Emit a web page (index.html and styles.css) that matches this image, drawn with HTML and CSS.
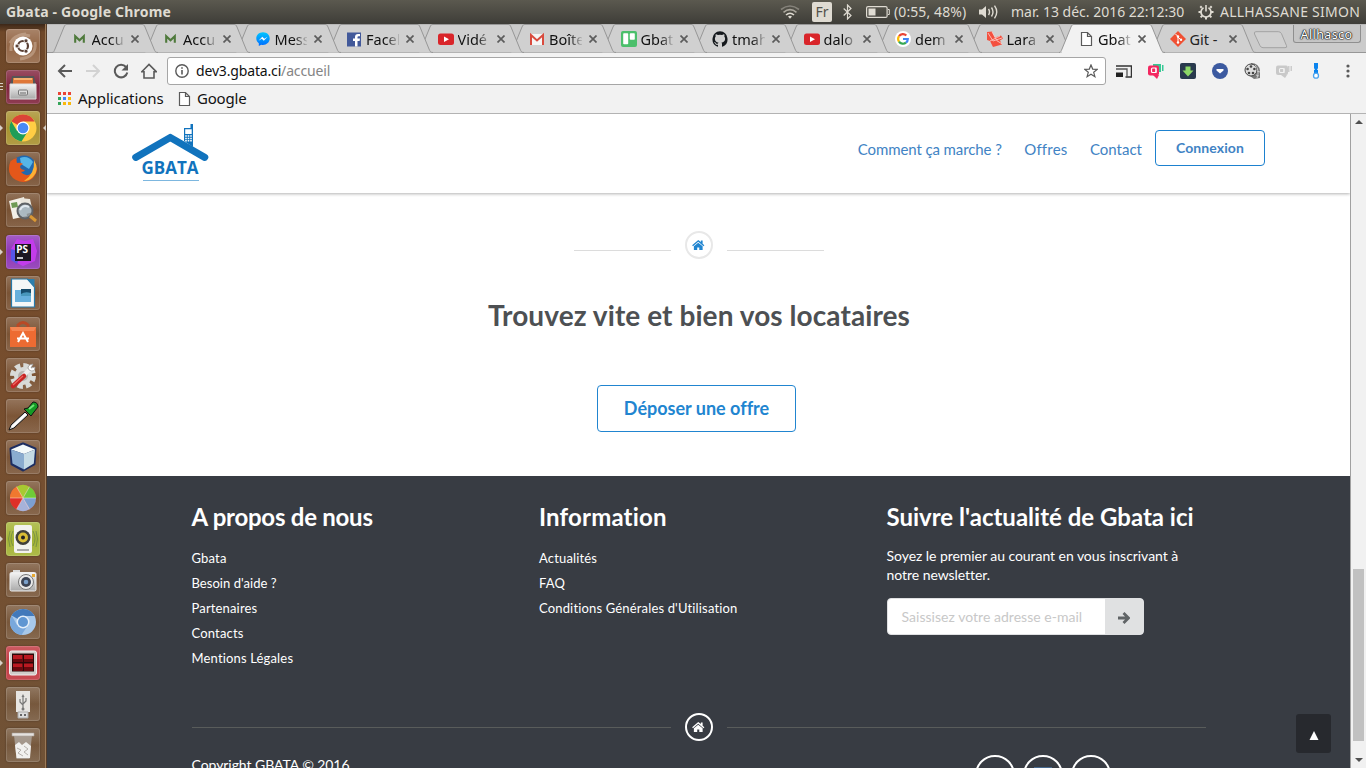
FILE: index.html
```html
<!DOCTYPE html>
<html lang="fr">
<head>
<meta charset="utf-8">
<title>Gbata</title>
<link rel="stylesheet" href="styles.css">
</head>
<body>
<svg class="defs" width="0" height="0">
  <defs>
    <linearGradient id="msg" x1="0" y1="0" x2="0" y2="1"><stop offset="0" stop-color="#00c6ff"/><stop offset="1" stop-color="#006bff"/></linearGradient>
    <linearGradient id="metal" x1="0" y1="0" x2="0" y2="1"><stop offset="0" stop-color="#f4f4f4"/><stop offset="1" stop-color="#a9a9a9"/></linearGradient>
    <symbol id="tab" viewBox="0 0 106 29"><path d="M0 28.5C2 28.5 2 27 3 25L12 3C13 1 13 .5 15 .5H90C92 .5 92 1 93 3L102 25C103 27 103 28.5 106 28.5Z" fill="currentColor"/><path d="M0 28.5C2 28.5 2 27 3 25L12 3C13 1 13 .5 15 .5H90C92 .5 92 1 93 3L102 25C103 27 103 28.5 106 28.5" fill="none" stroke="#979797"/></symbol>
    <symbol id="x" viewBox="0 0 8 8"><path d="M.5.5l7 7m0-7l-7 7" stroke="#5c5c5c" stroke-width="1.7"/></symbol>
    <symbol id="m" viewBox="0 0 16 16"><path d="M3.200 11.800V5.200l4.300 4 4.300-4v6.600" fill="none" stroke="#4f7a3c" stroke-width="2.100"/></symbol>
    <symbol id="yt" viewBox="0 0 16 16"><rect y="2.500" width="16" height="11.500" rx="2.500" fill="#d9252a"/><path d="M6 5.500l5 2.700-5 2.700z" fill="#fff"/></symbol>
    <symbol id="page" viewBox="0 0 16 16"><path d="M3.500 1.500h6l4 4v9h-10zM9.500 1.500v4h4" fill="#fff" stroke="#5a5a5a" stroke-width="1.200"/></symbol>
    <symbol id="house" viewBox="0 0 14 12"><path d="M7 0L0 6l1 1 6-5 6 5 1-1-2-1.800V.5h-2v1.900z"/><path d="M2 7.200L7 3l5 4.200V12H8.200V8.500H5.800V12H2z"/></symbol>
  </defs>
</svg>

<header class="panel">
  <span class="panel-title">Gbata - Google Chrome</span>
  <div class="indicators">
    <svg class="i-wifi" width="20" height="16" viewBox="0 0 20 16" fill="none" stroke-width="1.600"><path d="M1 5.500Q10-1.500 19 5.500" stroke="#85827a"/><path d="M3.500 8.300Q10 3 16.500 8.300" stroke="#aaa69c"/><path d="M6 11Q10 7.500 14 11" stroke="#dfdbd2"/><path d="M8 12.500Q10 11 12 12.500L10 14.700z" fill="#dfdbd2"/></svg>
    <span class="lang">Fr</span>
    <svg class="i-bt" width="9" height="16" viewBox="0 0 9 16" fill="none" stroke="#dfdbd2" stroke-width="1.200"><path d="M.7 4.500l7.300 7L4.500 15V1L8 4.500l-7.300 7"/></svg>
    <svg class="i-bat" width="24" height="12" viewBox="0 0 24 12"><rect x=".6" y=".6" width="20.500" height="10.800" rx="1.500" fill="none" stroke="#dfdbd2" stroke-width="1.200"/><path d="M2.500 2.500h7v7h-7z" fill="#dfdbd2"/><path d="M22 3.500h1.300v5H22" fill="none" stroke="#dfdbd2"/></svg>
    <span class="battery">(0:55, 48%)</span>
    <svg class="i-vol" width="20" height="14" viewBox="0 0 20 14"><path d="M0 4.500h3L7 1v12L3 9.500H0z" fill="#dfdbd2"/><path d="M9.500 4q2 3 0 6M12.500 2.500q3 4.500 0 9M15.500.7q4.500 6.300 0 12.600" fill="none" stroke="#dfdbd2" stroke-width="1.400"/></svg>
    <span class="date">mar. 13 déc. 2016 22:12:30</span>
    <svg class="i-gear" width="16" height="16" viewBox="0 0 16 16" fill="none" stroke="#dfdbd2"><path d="M5.500 3.700a5 5 0 1 0 5 0" stroke-width="1.700"/><path d="M8 1v6.500" stroke-width="1.600"/><path d="M3.700 3.700L2.300 2.300M12.300 3.700l1.400-1.400M3 8H.5M13 8h2.500M4.300 11.700l-1.700 1.700M11.700 11.700l1.700 1.700M8 13v2.500" stroke-width="2"/></svg>
    <span class="user">ALLHASSANE SIMON</span>
  </div>
</header>

<div class="desktop">
<nav class="launcher">
  <div class="app ubuntu"><svg viewBox="0 0 34 34"><path d="M5 22Q4 6 20 5M29 13Q31 28 14 30M4 14Q10 3 24 7" fill="none" stroke="#d9c0ad" stroke-width="3" opacity=".45"/><circle cx="17" cy="17" r="9.500" fill="#fff"/><circle cx="17" cy="17" r="5" fill="none" stroke="#5a4034" stroke-width="2.200"/><g fill="#5a4034" stroke="#fff" stroke-width=".8"><circle cx="11" cy="17" r="2"/><circle cx="20" cy="11.800" r="2"/><circle cx="20" cy="22.200" r="2"/></g></svg></div>
  <div class="app files"><i class="lines"></i><svg viewBox="0 0 34 34"><path d="M6 6h22l2 9H4z" fill="#555"/><path d="M7 8h20v7H7z" fill="#df7738"/><path d="M8 8h18v2H8z" fill="#f5b06e"/><path d="M4 14h26v15H4z" fill="url(#metal)" stroke="#ddd"/><rect x="12.500" y="20" width="9" height="5" rx="1" fill="#ddd" stroke="#777"/><path d="M14 23h6" stroke="#666"/></svg></div>
  <div class="app chrome"><i class="run"></i><i class="focus"></i><svg viewBox="0 0 34 34"><circle cx="17" cy="17" r="13.500" fill="#ffce44"/><path d="M17 17L5.300 10.200A13.500 13.500 0 0 1 28.700 10.500H17z" fill="#db4437"/><path d="M5.300 10.200A13.500 13.500 0 0 0 15.500 30.400L22 20 17 17 11 20z" fill="#1f9d58"/><circle cx="17" cy="17" r="6.500" fill="#fff"/><circle cx="17" cy="17" r="5.300" fill="#4a8af4"/></svg></div>
  <div class="app"><svg viewBox="0 0 34 34"><circle cx="18" cy="16" r="12.500" fill="#2268ae"/><path d="M14 6q8-3 13 4l-4 7-8-5z" fill="#56b5e8"/><path d="M5 8q-6 14 5 20 9 5 17-2 5-6 4-12-2 6-6 8-6 3-10-2 3 0 4-2-4 0-5-3 0-2 3-3-3-2-6-1-1-3 0-5-4 1-6 3z" fill="#e4571a"/><path d="M28 8q6 10-1 17-4 4-9 4 11-7 10-21z" fill="#fbb034"/></svg></div>
  <div class="app"><svg viewBox="0 0 34 34"><path d="M3 8l15-4 3 19-14 3z" fill="#f3f0e8"/><path d="M5 10l6-1 1 5-6 1z" fill="#6e9a54"/><path d="M14 5l10 1 3 13-10 3z" fill="#e9e6dd"/><circle cx="19" cy="18" r="7.500" fill="#94a8b6" fill-opacity=".75" stroke="#5e6266" stroke-width="2"/><path d="M14 17q3-6 9-3" stroke="#e1e9ef" stroke-width="2" fill="none"/><path d="M24 23l6 5" stroke="#d99834" stroke-width="3"/></svg></div>
  <div class="app storm"><i class="run"></i><svg viewBox="0 0 34 34"><path d="M5 14L11 4l8 2 8-2 4 12-2 10-12 5-10-5z" fill="#c23ceb"/><path d="M5 14l10 3-4 12-6-4z" fill="#5756e7"/><path d="M9 9h16v17H9z" fill="#1b1620"/><path d="M11 23h6" stroke="#fff" stroke-width="1.500"/><text x="10.300" y="18" font-family="Open Sans" font-size="10" font-weight="700" fill="#fff">PS</text></svg></div>
  <div class="app"><svg viewBox="0 0 34 34"><path d="M5.500 3h16l7 8v20h-23z" fill="#f5f7f7" stroke="#267aab" stroke-width="1.200"/><path d="M21 3h7.500v8z" fill="#2c7eac"/><path d="M9 14h16v12H9z" fill="#67b0dc"/><path d="M15 13h10v6H15z" fill="#174c6b"/><path d="M15 18q4-3 10-1v3H15z" fill="#4897bb"/></svg></div>
  <div class="app"><svg viewBox="0 0 34 34"><path d="M12 11V8q5-5 10 0v3" fill="none" stroke="#b84926" stroke-width="3"/><path d="M4 10h26v20H4z" fill="#ed6b32"/><path d="M4 10h26l-2 4H6z" fill="#f58653"/><path d="M12 25l5-9 5 9M11 21.500h12" fill="none" stroke="#fff" stroke-width="2"/></svg></div>
  <div class="app"><svg viewBox="0 0 34 34"><circle cx="17" cy="18" r="10" fill="none" stroke="#d8dad8" stroke-width="6" stroke-dasharray="5 2.850"/><circle cx="17" cy="18" r="9" fill="#d8dad8"/><circle cx="17" cy="18" r="5" fill="#b7b2ae"/><path d="M17 18l8-8" stroke="#eee" stroke-width="4"/><path d="M23 12q-3-5 4-6l-2 4 4-1q0 6-6 3" fill="#fff" stroke="#999" stroke-width=".7"/><path d="M7 28l11-10" stroke="#c72525" stroke-width="4.500" stroke-linecap="round"/><path d="M7 27l10-9" stroke="#ef6862" stroke-width="1.200"/></svg></div>
  <div class="app"><svg viewBox="0 0 34 34"><path d="M3 31l2-5L19 13l3 3L8 29z" fill="#ddd" stroke="#111"/><path d="M6 28L20 15" stroke="#fff" stroke-width="2"/><path d="M18 10l7 7 3-4 4-5q0-5-5-5l-5 6z" fill="#159b25" stroke="#111"/><path d="M23 10l5-4" stroke="#6ee476" stroke-width="2"/></svg></div>
  <div class="app"><svg viewBox="0 0 34 34"><path d="M17 4l12 5-1 15-11 6-11-6L5 9z" fill="#1d2e61" stroke="#1d2e61" stroke-width="3" stroke-linejoin="round"/><path d="M5 9.500L17 4.500l12 5-11 4.500z" fill="#f4fafa"/><path d="M5 9.500L18 14v15.500L6.500 23.500z" fill="#8aaccf"/><path d="M29 9.500L18 14v15.500l9.800-6z" fill="#c5dbe5"/></svg></div>
  <div class="app"><svg viewBox="0 0 34 34"><circle cx="17" cy="17" r="13" fill="#e04b40"/><path d="M17 17L10.500 5.700A13 13 0 0 1 23.500 5.700z" fill="#a7c931"/><path d="M17 17L23.500 5.700A13 13 0 0 1 30 17z" fill="#6fcb38"/><path d="M17 17L4 17A13 13 0 0 1 10.500 5.700z" fill="#f0782f"/><path d="M17 17H30A13 13 0 0 1 23.500 28.300z" fill="#7c9fd0"/><path d="M17 17l6.500 11.300A13 13 0 0 1 10.500 28.300z" fill="#a6b2d9"/><path d="M17 17L10.500 28.300A13 13 0 0 1 4 17z" fill="#de2f28"/><path d="M4 17h26M10.500 5.700l13 22.600M10.500 28.300l13-22.600" stroke="#fff" stroke-width=".6" opacity=".7"/></svg></div>
  <div class="app audio"><i class="run"></i><svg viewBox="0 0 34 34"><path d="M7 9q-4 8 0 15M27 9q4 8 0 15M4 9q-3 8 0 16M30 9q3 8 0 16" fill="none" stroke="#6e8b45" opacity=".8"/><rect x="8" y="3" width="18" height="28" rx="2" fill="#f3f3ef"/><circle cx="17" cy="15.500" r="7.500" fill="#3f3f3a"/><circle cx="17" cy="15.500" r="5" fill="#d9bd35"/><circle cx="17" cy="15.500" r="2" fill="#222"/><path d="M11 28h12" stroke="#aaa" stroke-width="2"/></svg></div>
  <div class="app"><svg viewBox="0 0 34 34"><path d="M7 7h7v4H7z" fill="#ddd"/><rect x="4" y="9.500" width="26" height="18.500" rx="1.500" fill="url(#metal)" stroke="#eee"/><circle cx="20" cy="19" r="7.500" fill="#e8e8e8" stroke="#777"/><circle cx="20" cy="19" r="5" fill="#3c4455"/><circle cx="20" cy="19" r="2.300" fill="#7aa0cb"/><path d="M26 11h3v3h-3z" fill="#e7a934"/></svg></div>
  <div class="app"><svg viewBox="0 0 34 34"><circle cx="17" cy="17" r="13" fill="#a7c8ea"/><path d="M17 17L5.700 10.500A13 13 0 0 1 28.500 11H17z" fill="#4279ba"/><path d="M5.700 10.500A13 13 0 0 0 15.500 30L22 20 17 17l-6 3z" fill="#79a8dc"/><circle cx="17" cy="17" r="6.500" fill="#e5eff9"/><circle cx="17" cy="17" r="5" fill="#5f96d2"/></svg></div>
  <div class="app term"><i class="run"></i><svg viewBox="0 0 34 34"><rect x="3.500" y="5" width="27" height="24" rx="2" fill="#d0ccc9" stroke="#f1eeee"/><path d="M6 7.500h22v18H6z" fill="#2b0809"/><path d="M7 9h9.500v7H7zM18 9h9v7h-9zM7 17.500h9.500v7H7zM18 17.500h9v7h-9z" fill="#b91921"/><path d="M7 13h9.500v3H7zM18 13h9v3h-9zM7 21h9.500v3.500H7zM18 21h9v3.500h-9z" fill="#68090e"/></svg></div>
  <div class="app"><svg viewBox="0 0 34 34"><path d="M10 4h14v21H10z" fill="#e7e5e2"/><path d="M12 25h10v6H12z" fill="#ddd" stroke="#aaa"/><path d="M14 28h2M18 28h2" stroke="#666" stroke-width="2"/><path d="M17 9v13M14 12v3l3 3M20 11v3l-3 3" fill="none" stroke="#777" stroke-width="1.200"/><path d="M15.500 10l1.500-3 1.500 3z" fill="#777"/><circle cx="17" cy="22" r="1.500" fill="#777"/></svg></div>
  <div class="app"><svg viewBox="0 0 34 34"><path d="M8 7h18l-2.500 24h-13z" fill="#b7b1ab" fill-opacity=".7"/><path d="M6 5h22v3H6z" fill="#e5e2df" stroke="#aaa39c" stroke-width=".6"/><path d="M9 17l4-3 3 3 4-3 5 4-1 12H10.500z" fill="#f1f0ee"/><path d="M11 20l4 2-3 3 5 3M18 18l4 3-4 3 4 3" fill="none" stroke="#b5b0ab"/></svg></div>
</nav>

<main class="browser">
  <div class="tabstrip">
    <div class="tab"><svg class="shape"><use href="#tab"/></svg><svg class="fav"><use href="#m"/></svg><span>Accu</span><svg class="x"><use href="#x"/></svg></div>
    <div class="tab"><svg class="shape"><use href="#tab"/></svg><svg class="fav"><use href="#m"/></svg><span>Accu</span><svg class="x"><use href="#x"/></svg></div>
    <div class="tab"><svg class="shape"><use href="#tab"/></svg><svg class="fav" viewBox="0 0 16 16"><path d="M8 1.200C4 1.200 1.300 4 1.300 7.500c0 2 1 3.700 2.500 4.800V15l2.400-1.300c4.500 1 8.500-2 8.500-6.200C14.700 4 12 1.200 8 1.200z" fill="url(#msg)"/><path d="M3.500 9.700l3.800-4 2 2 3.300-2-3.800 4-2-2z" fill="#fff"/></svg><span>Mess</span><svg class="x"><use href="#x"/></svg></div>
    <div class="tab"><svg class="shape"><use href="#tab"/></svg><svg class="fav" viewBox="0 0 16 16"><path d="M1 1.500h14v14H1z" fill="#42599a"/><path d="M9 15.500V10H7V7.500h2V6q0-3 3-3h2v2.300h-1.500q-1 0-1 1v1.200H14L13.600 10h-2.100v5.500" fill="#fff"/></svg><span>Facel</span><svg class="x"><use href="#x"/></svg></div>
    <div class="tab"><svg class="shape"><use href="#tab"/></svg><svg class="fav"><use href="#yt"/></svg><span>Vidé</span><svg class="x"><use href="#x"/></svg></div>
    <div class="tab"><svg class="shape"><use href="#tab"/></svg><svg class="fav" viewBox="0 0 16 16"><path d="M1 3h14v11H1z" fill="#f5f5f5"/><path d="M2 14V4l6 5.500L14 4v10" fill="none" stroke="#d94b3e" stroke-width="2"/></svg><span>Boîte</span><svg class="x"><use href="#x"/></svg></div>
    <div class="tab"><svg class="shape"><use href="#tab"/></svg><svg class="fav" viewBox="0 0 16 16"><rect width="16" height="16" rx="2" fill="#4bbf6b"/><rect x="2.200" y="2.300" width="5" height="11" rx=".8" fill="#fff"/><rect x="8.800" y="2.300" width="5" height="6.500" rx=".8" fill="#fff"/></svg><span>Gbat</span><svg class="x"><use href="#x"/></svg></div>
    <div class="tab"><svg class="shape"><use href="#tab"/></svg><svg class="fav" viewBox="0 0 16 16"><path d="M8 .3a8 8 0 0 0-2.500 15.400c.4 0 .5-.2.500-.4v-1.500c-2.200.5-2.700-1-2.700-1-.4-.9-.9-1.200-.9-1.200-.7-.5.100-.5.100-.5.800.1 1.200.8 1.200.8.700 1.300 1.900.9 2.300.7.100-.5.300-.9.500-1.100-1.800-.2-3.600-.9-3.600-4 0-.9.300-1.600.8-2.100 0-.200-.4-1 .1-2.100 0 0 .7-.2 2.200.8a7.500 7.500 0 0 1 4 0c1.500-1 2.200-.8 2.200-.8.500 1.100.2 1.900.1 2.100.5.500.8 1.200.8 2.100 0 3.100-1.900 3.800-3.700 4 .3.300.6.800.6 1.500v2.300c0 .2.100.5.500.4A8 8 0 0 0 8 .3z" fill="#15191d"/></svg><span>tmah</span><svg class="x"><use href="#x"/></svg></div>
    <div class="tab"><svg class="shape"><use href="#tab"/></svg><svg class="fav"><use href="#yt"/></svg><span>dalo</span><svg class="x"><use href="#x"/></svg></div>
    <div class="tab"><svg class="shape"><use href="#tab"/></svg><svg class="fav" viewBox="0 0 16 16"><circle cx="8" cy="8" r="8" fill="#fff"/><g fill="none" stroke-width="2.200"><path d="M4 5.200A4.800 4.800 0 0 1 11.300 4.500" stroke="#e94435"/><path d="M4 10.600A4.800 4.800 0 0 1 4 5.200" stroke="#fbbc05"/><path d="M11 11.700A4.800 4.800 0 0 1 4 10.600" stroke="#34a853"/><path d="M8 8h4.800q0 2.400-1.800 3.700" stroke="#4285f4"/></g></svg><span>dem</span><svg class="x"><use href="#x"/></svg></div>
    <div class="tab"><svg class="shape"><use href="#tab"/></svg><svg class="fav" viewBox="0 0 16 16"><path d="M0 1l5-.5 3 6 6-2 2 3-3 2 2 4-9 2.500-3-6-3-1z" fill="#f4503f"/><path d="M1 2l5 8 9-3M5 .8l5 9 5 3M3 10l10-5" stroke="#fbd3cd" stroke-width=".8" fill="none"/></svg><span>Lara</span><svg class="x"><use href="#x"/></svg></div>
    <div class="tab active"><svg class="shape"><use href="#tab"/></svg><svg class="fav"><use href="#page"/></svg><span>Gbat</span><svg class="x"><use href="#x"/></svg></div>
    <div class="tab"><svg class="shape"><use href="#tab"/></svg><svg class="fav" viewBox="0 0 16 16"><path d="M8 0l8 8-8 8-8-8z" fill="#f05033"/><path d="M5.500 3l2.500 2.500v6M8 6l3 3" stroke="#fff" fill="none"/><g fill="#fff"><circle cx="8" cy="5.500" r="1.200"/><circle cx="8" cy="11.500" r="1.200"/><circle cx="11" cy="8.700" r="1.200"/></g></svg><span class="fits">Git -</span><svg class="x"><use href="#x"/></svg></div>
    <svg class="newtab" width="35" height="18" viewBox="0 0 35 18"><path d="M3 .7h22.500q2 0 3 2l5 12q1 2-1.500 2H10q-2 0-3-2L1.500 3Q.7.700 3 .7z" fill="#d0d0d0" stroke="#a2a2a2"/></svg>
    <span class="profile">Allhasco</span>
  </div>

  <div class="toolbar">
    <svg class="nav-i" viewBox="0 0 16 16"><path d="M15 8H2m6-6L2 8l6 6" fill="none" stroke="#5a5a5a" stroke-width="2"/></svg>
    <svg class="nav-i" viewBox="0 0 16 16"><path d="M1 8h13M8 2l6 6-6 6" fill="none" stroke="#d2d2d2" stroke-width="2"/></svg>
    <svg class="nav-i" viewBox="0 0 16 16"><path d="M13 4A6.300 6.300 0 1 0 14.300 9.500" fill="none" stroke="#5a5a5a" stroke-width="2"/><path d="M15 1v6.500H8.500z" fill="#5a5a5a"/></svg>
    <svg class="nav-i" viewBox="0 0 16 16"><path d="M.8 8.700L8 1.500l7.200 7.200H13V15H3V8.700z" fill="none" stroke="#5a5a5a" stroke-width="1.600"/></svg>
    <div class="omnibox">
      <svg width="14" height="14" viewBox="0 0 14 14"><circle cx="7" cy="7" r="6.200" fill="none" stroke="#5a5a5a" stroke-width="1.400"/><path d="M7 6v4.500M7 3.200v1.600" stroke="#5a5a5a" stroke-width="1.600"/></svg>
      <span class="url">dev3.gbata.ci<em>/accueil</em></span>
      <svg width="14" height="14" viewBox="0 0 14 14"><path d="M7 .9l1.700 4.200 4.500.3-3.500 2.900 1.200 4.400L7 10.300l-3.900 2.400 1.200-4.400L.8 5.400l4.500-.3z" fill="none" stroke="#5a5a5a" stroke-width="1.200"/></svg>
    </div>
    <div class="exts">
      <svg viewBox="0 0 16 16"><path d="M0 3h15.500v11h-6" fill="none" stroke="#333" stroke-width="1.500"/><path d="M0 6h11v8" fill="none" stroke="#555" stroke-width="1.300"/><path d="M0 9.500h7V14H0z" fill="#222"/></svg>
      <svg viewBox="0 0 16 16"><path d="M5 1h8v8H5zM14 2h1.500v6H14z" fill="#37c995"/><rect y="2.500" width="11" height="10" rx="2" fill="#f32860"/><path d="M5 12h6l-2 4z" fill="#f32860"/><rect x="3.500" y="5" width="4.500" height="4.500" rx="1" fill="none" stroke="#fff" stroke-width="1.200"/><path d="M8 4.500V10" stroke="#fff"/></svg>
      <svg viewBox="0 0 16 16"><rect width="16" height="16" rx="2" fill="#293a4e"/><path d="M5.500 3.500h5v4h3L8 13.500 2.500 7.500h3z" fill="#8cd867"/></svg>
      <svg viewBox="0 0 16 16"><circle cx="8" cy="8" r="8" fill="#3c5aa0"/><path d="M4.500 6h7v1.500L8 10.500 4.500 7.500z" fill="#fff"/></svg>
      <svg viewBox="0 0 16 16"><path d="M7 0q8 0 9 8v7l-6 1-4-3z" fill="#777"/><circle cx="7" cy="7" r="6" fill="#ddd" stroke="#444"/><g fill="#444"><circle cx="7" cy="3.500" r="1.300"/><circle cx="3.600" cy="6" r="1.300"/><circle cx="10.400" cy="6" r="1.300"/><circle cx="5" cy="10" r="1.300"/><circle cx="9" cy="10" r="1.300"/></g><path d="M11 2q5 5 2 13M13 8l3 1M12 12l3 1" fill="none" stroke="#ccc"/></svg>
      <svg viewBox="0 0 16 16"><path d="M12 3h1.500v6H12zM14.500 3H16v5h-1.500z" fill="#ccc"/><rect y="2.500" width="12" height="9.500" rx="2" fill="#c9c9c9"/><path d="M5 12h6l-2 3z" fill="#c9c9c9"/><rect x="3.500" y="5.500" width="4.500" height="4" rx="1" fill="none" stroke="#f2f2f2" stroke-width="1.100"/><path d="M8 5v5" stroke="#f2f2f2"/></svg>
      <svg viewBox="0 0 16 16"><path d="M6 0h4v5l-1 2h1v3H6V7h1L6 5z" fill="#0b84ee"/><circle cx="8" cy="12.700" r="2.500" fill="#fff" stroke="#4ca4ef" stroke-width="1.300"/></svg>
      <svg viewBox="0 0 16 16" fill="#5a5a5a"><circle cx="8" cy="3" r="1.600"/><circle cx="8" cy="8" r="1.600"/><circle cx="8" cy="13" r="1.600"/></svg>
    </div>
  </div>

  <div class="bookmarks">
    <svg width="13" height="13" viewBox="0 0 13 13"><path d="M0 0h3v3H0zM5 0h3v3H5zM10 0h3v3h-3z" fill="#ea4335"/><path d="M0 5h3v3H0zM0 10h3v3H0z" fill="#35a559"/><path d="M5 5h3v3H5z" fill="#4285f4"/><path d="M10 5h3v3h-3zM5 10h3v3H5zM10 10h3v3h-3z" fill="#f9b80c"/></svg>
    <span>Applications</span>
    <svg class="bm-page" width="16" height="16"><use href="#page"/></svg>
    <span class="bm-google">Google</span>
  </div>

  <div class="viewport">
    <div class="site">
      <header class="site-head">
        <svg class="logo" width="80" height="62" viewBox="0 0 80 62">
          <path d="M4 31.500L38.300 13.500 73 31.500" transform="translate(0 -17.500) scale(1 1.120)" fill="none" stroke="none"/>
          <path d="M3.800 34.800L38.300 15 72.700 34.800" transform="translate(0 -.5)" fill="none" stroke="#1173bd" stroke-width="7.200" stroke-linecap="round" stroke-linejoin="round"/>
          <path d="M52 5h6.500V1H61v23l-9-6z" fill="#1173bd"/><path d="M53.200 6.300h6.500v4.700h-6.500zM53.200 12.300h1.600v1.500h-1.600zM55.700 12.300h1.600v1.500h-1.600zM58.200 12.300h1.600v1.500h-1.600zM53.200 14.700h1.600v1.500h-1.600zM55.700 14.700h1.600v1.500h-1.600zM58.200 14.700h1.600v1.500h-1.600zM53.200 17.100h1.600v1.500h-1.600zM55.700 17.100h1.600v1.500h-1.600zM58.200 17.100h1.600v1.500h-1.600z" fill="#fff"/>
          <text x="9.500" y="51" textLength="57" lengthAdjust="spacingAndGlyphs" font-family="Open Sans" font-weight="700" font-size="18.500" fill="#1173bd">GBATA</text>
          <path d="M11 57.500h56" stroke="#7db7df"/>
        </svg>
        <nav class="menu"><a class="how">Comment ça marche ?</a><a class="offers">Offres</a><a>Contact</a><a class="login">Connexion</a></nav>
      </header>

      <section class="hero">
        <div class="divider"><i></i><b><svg width="12.500" height="10.500"><use href="#house"/></svg></b><i></i></div>
        <h1>Trouvez vite et bien vos locataires</h1>
        <a class="cta">Déposer une offre</a>
      </section>

      <footer class="foot">
        <div class="cols">
          <div><h2 class="tight">A propos de nous</h2><ul><li>Gbata</li><li class="help">Besoin d'aide ?</li><li>Partenaires</li><li>Contacts</li><li>Mentions Légales</li></ul></div>
          <div><h2 class="wide">Information</h2><ul><li>Actualités</li><li>FAQ</li><li>Conditions Générales d'Utilisation</li></ul></div>
          <div><h2>Suivre l'actualité de Gbata ici</h2><p>Soyez le premier au courant en vous inscrivant à<br>notre newsletter.</p>
            <div class="field"><span>Saissisez votre adresse e-mail</span><b><svg width="12" height="12" viewBox="0 0 12 12"><path d="M0 6h10M5.500 1l5 5-5 5" fill="none" stroke="#606466" stroke-width="2.800"/></svg></b></div>
          </div>
        </div>
        <div class="divider dark"><i></i><b><svg width="12.500" height="10.500"><use href="#house"/></svg></b><i></i></div>
        <div class="legal"><span>Copyright GBATA © 2016</span><div class="social"><i></i><i><u></u></i><i></i></div></div>
      </footer>
      <span class="totop"><svg width="10" height="9"><path d="M5 0l4.500 9h-9z" fill="#fff"/></svg></span>
    </div>
    <div class="scroll"><i class="up"></i><i class="thumb"></i><i class="down"></i></div>
  </div>
</main>
</div>
</body>
</html>
```
FILE: styles.css
```css
* { box-sizing: border-box; }
body { margin: 0; width: 1366px; height: 768px; overflow: hidden; display: flex; flex-direction: column; font-family: Lato, sans-serif; font-variant-ligatures: none; }
.defs { position: absolute; }
svg { flex: none; display: block; }
#house { overflow: visible; }

.panel { height: 24px; flex: none; background: linear-gradient(#5b594f, #3e3d38); color: #dfdbd2; font: 14px/24px "Noto Sans", sans-serif; display: flex; justify-content: space-between; padding: 0 5px 0 6px; white-space: nowrap; }
.panel-title { font-weight: 700; letter-spacing: .19px; }
.indicators { display: flex; align-items: center; }
.i-wifi { margin-right: 12px; }
.lang { width: 20px; height: 20px; margin-right: 11px; border-radius: 2px; background: #dfdbd2; color: #53514b; line-height: 20px; text-align: center; }
.i-bat { margin: 0 4px 0 14px; }
.battery { width: 73px; letter-spacing: .1px; }
.i-vol { margin: 0 12px; }
.date { width: 175px; margin-right: 12px; }
.i-gear { margin-right: 6px; }
.user { width: 141px; letter-spacing: .25px; }

.desktop { flex: 1; min-height: 0; display: flex; }
.launcher { width: 47px; flex: none; background: linear-gradient(#3c2718, #6f4829 8px, #774e2e 50%, #705236); border-right: 1px solid #553b27; box-shadow: inset -1px 0 #9b7a58; padding: 5px 0 6px 6px; display: flex; flex-direction: column; justify-content: space-between; }
.app { width: 34px; height: 34px; border-radius: 3px; position: relative; background: linear-gradient(rgba(255,255,255,.22), rgba(255,255,255,.04) 50%, rgba(255,255,255,.14)); box-shadow: inset 0 0 0 1px rgba(255,255,255,.14), 0 0 2px rgba(0,0,0,.35); }
.app svg { width: 34px; height: 34px; }
.ubuntu { background-color: #90613f; }
.files { background-color: #7c1c36; }
.chrome { background-color: #a58d27; }
.storm { background-color: #8a2fb3; }
.audio { background-color: #a0b02c; }
.term { background-color: #bf2f38; }
.run { position: absolute; left: -6px; top: 14px; border: 3px solid transparent; border-left-color: #d8d0c8; border-right: 0; }
.focus { position: absolute; right: -6px; top: 14px; border: 3px solid transparent; border-right-color: #d8d0c8; border-left: 0; }
.lines { position: absolute; left: -6px; top: 13px; width: 3px; height: 8px; background: repeating-linear-gradient(#d8d0c8 0 1px, transparent 1px 3px); }

.browser { flex: 1; min-width: 0; display: flex; flex-direction: column; background: #f2f2f2; font-family: "Noto Sans", sans-serif; }
.tabstrip { height: 29px; flex: none; padding-left: 5px; background: linear-gradient(#b9b9b9 1px, #cbcbcb 1px, #cbcbcb 28px, #979797 28px); display: flex; isolation: isolate; }
.tab { width: 106px; height: 29px; margin-right: -14.5px; flex: none; position: relative; display: flex; align-items: center; color: #d0d0d0; }
.tab:nth-child(1) { z-index: 13; } .tab:nth-child(2) { z-index: 12; } .tab:nth-child(3) { z-index: 11; } .tab:nth-child(4) { z-index: 10; }
.tab:nth-child(5) { z-index: 9; } .tab:nth-child(6) { z-index: 8; } .tab:nth-child(7) { z-index: 7; } .tab:nth-child(8) { z-index: 6; }
.tab:nth-child(9) { z-index: 5; } .tab:nth-child(10) { z-index: 4; } .tab:nth-child(11) { z-index: 3; } .tab:nth-child(12) { z-index: 14; } .tab:nth-child(13) { z-index: 2; }
.tab.active { color: #f2f2f2; }
.tab.active::after { content: ""; position: absolute; left: 3px; right: 3px; bottom: 0; height: 1px; background: #f2f2f2; }
.shape { position: absolute; inset: 0; width: 106px; height: 29px; z-index: -1; }
.fav { width: 16px; height: 16px; margin: 1px 0 0 19.500px; }
.tab span { width: 32.500px; margin-left: 4px; overflow: hidden; white-space: nowrap; font-size: 14.5px; line-height: 20px; background: linear-gradient(90deg, #111 60%, rgba(60,60,60,.15)); -webkit-background-clip: text; background-clip: text; color: transparent; }
.tab .fits { background: none; color: #222; }
.x { width: 8px; height: 8px; margin-left: 7px; margin-top: 1px; }
.newtab { margin: 7px 0 0 11px; }
.profile { margin: 1px 0 0 5px; width: 68px; height: 18px; border: 1px solid #8f8f8f; border-top: 0; border-radius: 0 0 3px 3px; background: #c6c6c6; color: #fff; font-size: 12.500px; line-height: 19px; text-align: center; letter-spacing: .4px; text-shadow: 0 0 1px #111, 0 0 1px #111, 0 0 1px #111, 0 0 2px #222; }

.toolbar { height: 36px; flex: none; display: flex; align-items: center; padding: 0 10px; }
.nav-i { width: 16px; height: 16px; margin-right: 12px; }
.nav-i:nth-child(4) { margin-right: 10px; }
.omnibox { width: 939px; height: 28px; border: 1px solid #a6a6a6; border-radius: 3px; background: #fff; display: flex; align-items: center; padding: 0 7px; }
.url { flex: 1; margin-left: 7px; padding-bottom: 2px; font-size: 14px; letter-spacing: -.16px; color: #111; }
.url em { font-style: normal; color: #858585; }
.exts { display: flex; gap: 16px; margin-left: 10px; }
.exts svg { width: 16px; height: 16px; }

.bookmarks { height: 25px; padding: 0 0 5px 11px; flex: none; display: flex; align-items: center; font-size: 15px; line-height: 20px; color: #111; border-bottom: 1px solid #b3b3b3; }
.bookmarks span { margin-left: 7px; width: 86px; padding-bottom: 2px; letter-spacing: -.04px; }
.bm-page { margin-left: 12px; }
.bookmarks .bm-google { margin-left: 5px; letter-spacing: -.2px; }

.viewport { flex: 1; min-height: 0; display: flex; }
.site { flex: 1; position: relative; overflow: hidden; background: #fff; font-family: Lato, sans-serif; border-right: 1px solid #a0a0a0; display: flex; flex-direction: column; }
.site-head { height: 79px; flex: none; display: flex; justify-content: space-between; padding: 9px 85px 0; box-shadow: 0 1px 3px rgba(0,0,0,.3); }
.menu { display: flex; color: #4183c4; font-size: 15px; line-height: 20px; white-space: nowrap; padding-top: 7px; }
.menu a { margin: 9px 0 0 22.500px; }
.menu .how { letter-spacing: -.1px; }
.menu .offers { letter-spacing: .2px; }
.menu .login { width: 110px; height: 36px; margin: 0 0 0 13px; border: 1px solid #1d81cf; border-radius: 4px; font-weight: 700; font-size: 14px; line-height: 34px; text-align: center; letter-spacing: .1px; }

.hero { height: 283px; flex: none; padding-top: 38px; display: flex; flex-direction: column; align-items: center; }
.divider { display: flex; align-items: center; justify-content: center; gap: 14px; }
.divider i { width: 97px; height: 1px; background: #dcdcdc; margin-top: 10px; }
.divider b { width: 28px; height: 28px; border: 2px solid #e8e8e8; border-radius: 50%; display: flex; align-items: center; justify-content: center; fill: #2185d0; }
.hero h1 { margin: 38px 0 0 1px; font-size: 28px; line-height: 36px; color: #4d5053; letter-spacing: .08px; }
.cta { width: 199px; height: 47px; margin: 52px 5px 0 0; padding-left: 1px; border: 1px solid #2185d0; border-radius: 4px; color: #2185d0; font-weight: 700; font-size: 18px; line-height: 45px; text-align: center; }

.foot { flex: 1; background: #383c43; color: #fff; padding: 24px 144px 0 144.500px; }
.cols { display: grid; grid-template-columns: 347.500px 347.500px 1fr; height: 213px; }
.foot h2 { margin: 0; font-size: 24px; line-height: 34px; white-space: nowrap; }
.foot .tight { letter-spacing: -.25px; }
.foot .wide { letter-spacing: .17px; }
.foot ul { list-style: none; margin: 12px 0 0; padding: 0; font-size: 13px; line-height: 25px; letter-spacing: .16px; }
.foot .help { letter-spacing: .04px; }
.foot p { margin: 12px 0 0; font-size: 14px; line-height: 19px; letter-spacing: -.05px; white-space: nowrap; }
.field { width: 257px; height: 37px; margin-top: 14px; border-radius: 4px; overflow: hidden; border: 1px solid #dfe0e2; background: #fff; display: flex; color: #c8c8c8; font-size: 14px; line-height: 36px; }
.field span { flex: 1; padding-left: 14px; letter-spacing: .03px; }
.field b { width: 38px; background: #e0e1e2; display: flex; align-items: center; justify-content: center; padding-top: 3px; }
.dark { width: 1014px; gap: 14px; }
.dark i { flex: 1; background: #595c5b; margin-top: 0; }
.dark b { border-color: #fff; fill: #fff; }
.legal { display: flex; justify-content: space-between; padding-right: 95px; font-size: 14px; line-height: 20px; letter-spacing: -.06px; }
.legal span { margin-top: 14px; }
.social { display: flex; gap: 8px; margin-top: 14px; }
.social i { width: 40px; height: 40px; border: 2px solid #fff; border-radius: 50%; display: flex; justify-content: center; }
.social u { width: 18px; height: 14px; margin-top: 10px; background: #46698f; }
.totop { position: absolute; right: 19px; bottom: 15px; width: 35px; height: 39px; border-radius: 3px; background: #27292e; display: flex; align-items: center; justify-content: center; padding-top: 3px; }

.scroll { width: 15px; flex: none; background: #f1f1f1; display: flex; flex-direction: column; align-items: center; }
.up { margin-top: 6px; border: 4px solid transparent; border-bottom-color: #505050; border-top: 0; }
.thumb { margin-top: 445px; width: 11px; height: 172px; background: #c1c1c1; }
.down { margin-top: 17px; border: 4px solid transparent; border-top-color: #505050; border-bottom: 0; }
```
